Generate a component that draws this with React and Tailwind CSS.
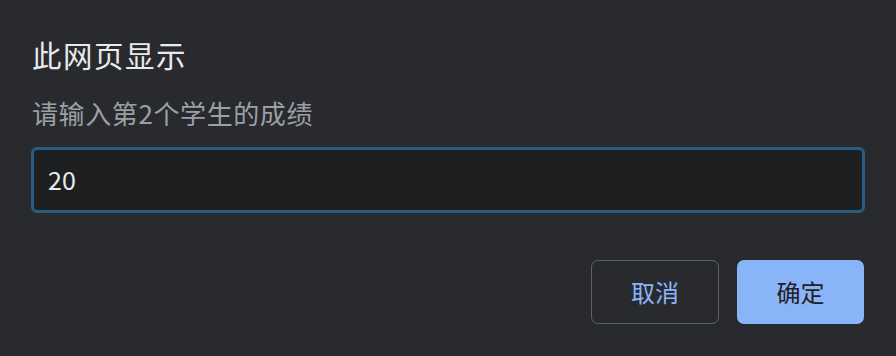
export default function App() {
  const font = { fontFamily: '"Noto Sans CJK SC", "Noto Sans", sans-serif' };
  return (
    <div className="w-[896px] h-[356px] bg-[#292a2d] flex flex-col px-[32px] pt-[36px]" style={font}>
      <div className="text-[29.5px] leading-[36px] text-[#e8eaed] tracking-[1.5px]">此网页显示</div>
      <div className="mt-[25px] text-[26px] leading-[32px] text-[#9aa0a6] tracking-[0.6px]">请输入第2个学生的成绩</div>
      <div className="mt-[18px] -ml-[1px] w-[834px] h-[66px] rounded-[6px] border-[3px] border-[#285c85] bg-[#1e1f21] flex items-center px-[14px]">
        <span className="text-[25px] text-[#e8eaed]">20</span>
      </div>
      <div className="mt-[47px] flex justify-end gap-[18px]">
        <button className="w-[128px] h-[64px] rounded-[7px] border border-[#5f6368] text-[#8ab4f8] text-[24px] flex items-center justify-center">取消</button>
        <button className="w-[127px] h-[64px] rounded-[7px] bg-[#8ab4f8] text-[#202124] text-[24px] flex items-center justify-center">确定</button>
      </div>
    </div>
  );
}
